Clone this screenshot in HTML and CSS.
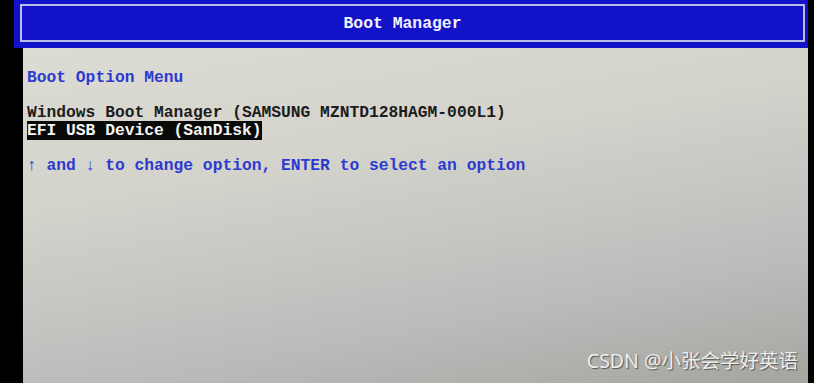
FILE: index.html
```html
<!DOCTYPE html>
<html lang="zh-CN">
<head>
  <meta charset="UTF-8" />
  <title>Boot Manager</title>
  <link rel="stylesheet" href="styles.css">
</head>
<body>

<div id="screen">
  <!-- header -->
  <div class="bios-header">
    <div class="header-box">Boot Manager</div>
  </div>

  <!-- menu -->
  <div class="bios-body">
    <div class="line blue">Boot Option Menu</div>
    <div class="line">&nbsp;</div>
    <div class="line">Windows Boot Manager (SAMSUNG MZNTD128HAGM-000L1)</div>
    <div class="line"><span class="selected">EFI USB Device (SanDisk)</span></div>
    <div class="line">&nbsp;</div>
    <div class="line blue">↑ and ↓ to change option, ENTER to select an option</div>
  </div>

  <div class="watermark">CSDN @小张会学好英语</div>
</div>

</body>
</html>
```

FILE: styles.css
```css
* {
  box-sizing: border-box;
}

html, body {
  margin: 0;
  height: 100%;
  background: #000;
  overflow: hidden;
}

#screen {
  position: relative;
  margin-left: 14px;
  width: 794px;
  height: 383px;
  display: flex;
  flex-direction: column;
  font-family: 'Liberation Mono', 'DejaVu Sans Mono', monospace;
}

/* header band */
.bios-header {
  height: 48px;
  background: #1212c8;
  padding: 4px 3px 6px 6px;
}

.header-box {
  height: 38px;
  border: 2px solid #b9bde6;
  color: #f2f2ff;
  font-weight: bold;
  font-size: 16.4px;
  display: flex;
  align-items: center;
  justify-content: center;
  padding-right: 20px;
}

/* grey content */
.bios-body {
  flex: 1;
  margin-left: 9px;
  padding: 21px 0 0 4px;
  background: linear-gradient(170deg, #dcdcd5 0%, #d3d3cc 35%, #bababa 75%, #a5a59f 100%);
  color: #1c1c1c;
  font-size: 16.3px;
  font-weight: bold;
  line-height: 17.5px;
}

.line {
  white-space: pre;
}

.blue {
  color: #2c3ad0;
}

.selected {
  background: #0a0a0a;
  color: #f4f4f4;
}

.watermark {
  position: absolute;
  right: 10px;
  bottom: 9px;
  font-family: 'Noto Sans', 'Noto Sans CJK SC', sans-serif;
  font-size: 19.5px;
  color: #eeeeee;
  text-shadow: 1px 1px 1px #555;
}
```
